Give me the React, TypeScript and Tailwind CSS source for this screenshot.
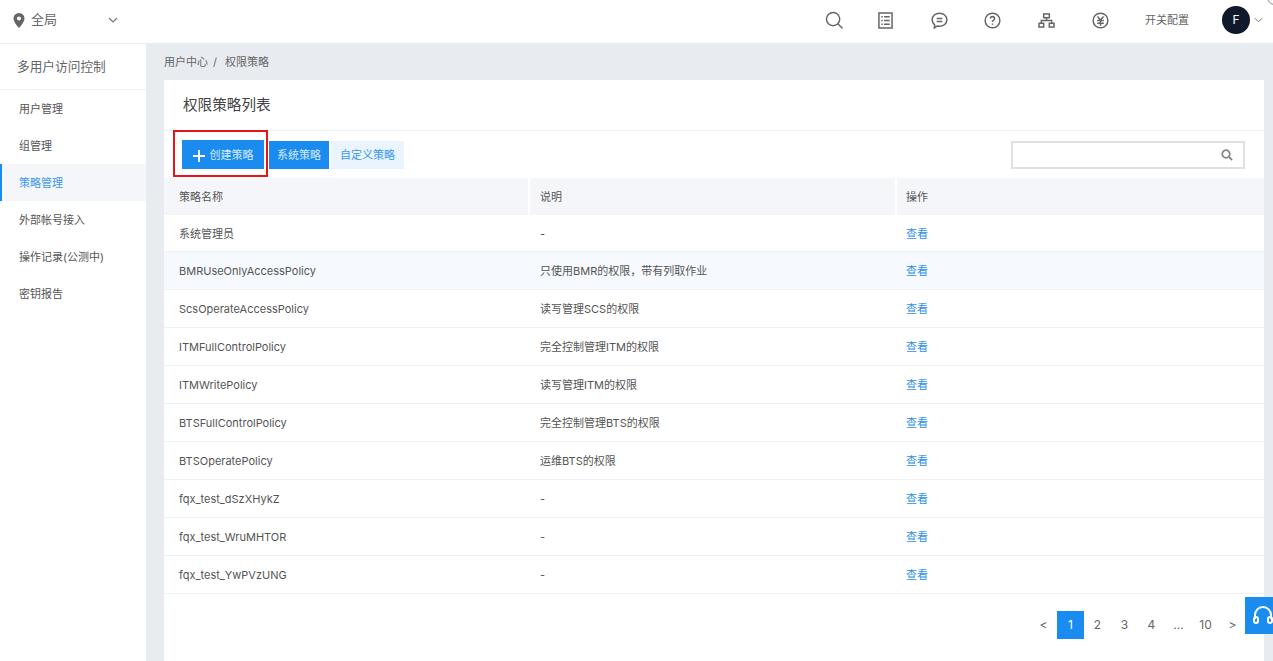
import React from "react";

const rows: [string, string][] = [
  ["系统管理员", "-"],
  ["BMRUseOnlyAccessPolicy", "只使用BMR的权限，带有列取作业"],
  ["ScsOperateAccessPolicy", "读写管理SCS的权限"],
  ["ITMFullControlPolicy", "完全控制管理ITM的权限"],
  ["ITMWritePolicy", "读写管理ITM的权限"],
  ["BTSFullControlPolicy", "完全控制管理BTS的权限"],
  ["BTSOperatePolicy", "运维BTS的权限"],
  ["fqx_test_dSzXHykZ", "-"],
  ["fqx_test_WruMHTOR", "-"],
  ["fqx_test_YwPVzUNG", "-"],
];
const menu = ["用户管理", "组管理", "策略管理", "外部帐号接入", "操作记录(公测中)", "密钥报告"];

const S = { fill: "none", stroke: "#666", strokeWidth: 1.6 };

function TopIcons() {
  return (
    <div className="flex items-center">
      <svg width="18" height="18" viewBox="0 0 20 20" {...S}>
        <circle cx="9" cy="9" r="7.400" />
        <path d="M14.500 14.500l4.500 4.500" strokeLinecap="round" />
      </svg>
      <svg width="15" height="17" viewBox="0 0 16 18" className="ml-[35px]" {...S}>
        <rect x="1" y="1" width="14" height="16" />
        <path d="M3.500 5h1.500M6.500 5h6M3.500 9h1.500M6.500 9h6M3.500 13h1.500M6.500 13h6" />
      </svg>
      <svg width="17" height="17" viewBox="0 0 18 18" className="ml-[38px]" {...S}>
        <path d="M9 1.200c4.300 0 7.800 3 7.800 7s-3.500 7-7.800 7c-.9 0-1.700-.1-2.500-.4l-3 2.200.4-3.400C2.200 12.300 1.200 10.400 1.200 8.200c0-4 3.500-7 7.800-7z" />
        <path d="M6 6.800h6M6 10h6" />
      </svg>
      <svg width="17" height="17" viewBox="0 0 18 18" className="ml-[36px]" {...S}>
        <circle cx="9" cy="9" r="7.800" />
        <path d="M6.800 7c0-1.300 1-2.100 2.200-2.100s2.200.8 2.200 2c0 1.900-2.200 1.800-2.200 3.700" />
        <path d="M9 12.200v1.400" />
      </svg>
      <svg width="17" height="15" viewBox="0 0 18 16" className="ml-[37px]" {...S}>
        <rect x="6" y="1" width="6" height="4" />
        <rect x="1" y="11" width="5" height="4" />
        <rect x="12" y="11" width="5" height="4" />
        <path d="M9 5v3M3.500 11V8h11v3" />
      </svg>
      <svg width="17" height="17" viewBox="0 0 18 18" className="ml-[37px]" {...S}>
        <circle cx="9" cy="9" r="7.800" />
        <path d="M5.800 4.800L9 8.500l3.200-3.700M5.500 9h7M5.500 11.800h7M9 8.500V14.500" />
      </svg>
    </div>
  );
}

export default function App() {
  return (
    <div className="relative flex h-[661px] w-[1273px] flex-col overflow-hidden bg-[#e8ebf0] font-['Inter','Noto_Sans_CJK_SC',sans-serif] text-[11px] text-[#555]">
      <header className="flex h-[43px] shrink-0 items-center bg-white pb-[3px]">
        <div className="flex w-[146px] items-center pl-[13px]">
          <svg width="12" height="15" viewBox="0 0 12 15">
            <path fillRule="evenodd" fill="#666" d="M6 0a5.500 5.500 0 0 1 5.500 5.500C11.500 9.300 6 15 6 15S.5 9.300.5 5.500A5.500 5.500 0 0 1 6 0zm0 3.500a2 2 0 1 0 0 4 2 2 0 0 0 0-4z" />
          </svg>
          <span className="ml-[6px] text-[13px] text-[#666]">全局</span>
          <svg width="10" height="6" viewBox="0 0 10 6" className="ml-[51px]" fill="none" stroke="#777" strokeWidth="1.200">
            <path d="M1 1l4 4 4-4" />
          </svg>
        </div>
        <div className="ml-auto flex items-center">
          <TopIcons />
          <span className="ml-[36px] text-[#666]">开关配置</span>
          <div className="ml-[33px] flex h-[28px] w-[28px] items-center justify-center rounded-full bg-[#10182b] text-[12px] text-white">F</div>
          <svg width="9" height="6" viewBox="0 0 10 6" className="ml-[4px] mr-[10px]" fill="none" stroke="#777" strokeWidth="1.100">
            <path d="M1 1l4 4 4-4" />
          </svg>
        </div>
      </header>

      <div className="flex min-h-0 flex-1">
        <aside className="w-[146px] shrink-0 border-t border-[#eceef2] bg-white">
          <div className="flex h-[46px] items-center border-b border-[#eceef2] pl-[17px] text-[12.700px] text-[#666]">多用户访问控制</div>
          {menu.map((m) => {
            const active = m === "策略管理";
            return (
              <div
                key={m}
                className={
                  active
                    ? "flex h-[37px] items-center border-l-2 border-[#1a8cf0] bg-[#f5f6fa] pl-[17px] pt-[2px] text-[#3a97f0]"
                    : "flex h-[37px] items-center pl-[19px] pt-[2px] text-[#555]"
                }
              >
                {m}
              </div>
            );
          })}
        </aside>

        <main className="flex min-w-0 flex-1 flex-col pl-[18px] pr-[9px]">
          <div className="flex h-[37px] shrink-0 items-center pt-[2px] text-[#666]">
            用户中心<span className="ml-[5px] mr-[8px]">/</span>权限策略
          </div>
          <section className="flex-1 bg-white">
            <div className="flex h-[51px] items-center border-b border-[#eef0f5] pl-[19px] pt-[2px] text-[14.600px] text-[#444]">权限策略列表</div>
            <div className="flex h-[47px] items-center pl-[18px] pr-[19px]">
              <div className="relative flex h-[29px] w-[82px] items-center justify-center bg-[#1a8cf0] pt-[2px] text-[#d6eaff]">
                <svg width="12" height="12" viewBox="0 0 12 12" className="mr-[5px]" stroke="#fff" strokeWidth="2">
                  <path d="M6 0v12M0 6h12" />
                </svg>
                创建策略
                <div className="absolute left-[-9px] top-[-10px] h-[47px] w-[95px] border-2 border-[#e8141c]" />
              </div>
              <div className="ml-[5px] flex h-[28px] w-[60px] items-center justify-center bg-[#1a8cf0] pt-[1px] text-[#d6eaff]">系统策略</div>
              <div className="ml-[2px] flex h-[28px] w-[73px] items-center justify-center bg-[#e9f4fe] pt-[1px] text-[#3a97f0]">自定义策略</div>
              <div className="ml-auto flex h-[28px] w-[234px] items-center justify-end border-2 border-[#e0e0e0] pr-[10px]">
                <svg width="12" height="12" viewBox="0 0 12 12" fill="none" stroke="#888" strokeWidth="1.800">
                  <circle cx="5" cy="5" r="3.800" />
                  <path d="M8 8l3.200 3.200" />
                </svg>
              </div>
            </div>

            <div className="flex h-[37px] items-center bg-[#f5f6fa] text-[#555]">
              <div className="flex h-full w-[366px] items-center border-r-2 border-white pl-[15px] pt-[2px]">策略名称</div>
              <div className="flex h-full w-[367px] items-center border-r-2 border-white pl-[10px] pt-[2px]">说明</div>
              <div className="pl-[9px] pt-[2px]">操作</div>
            </div>
            {rows.map(([name, desc], i) => (
              <div
                key={name}
                className={
                  (i === 1 ? "bg-[#f6fafe] " : "") +
                  (i === 0 ? "h-[37px] " : "h-[38px] ") +
                  "flex items-center border-b border-[#eef1f6] pt-[2px]"
                }
              >
                <div className="w-[366px] pl-[15px]">{name}</div>
                <div className="w-[367px] pl-[10px]">{desc}</div>
                <div className="pl-[9px] text-[#2d8fe8]">查看</div>
              </div>
            ))}

            <div className="mt-[17px] flex h-[28px] items-center justify-end pr-[18px] text-[12px] text-[#666]">
              <span className="w-[27px] text-center">&lt;</span>
              <span className="flex h-[28px] w-[27px] items-center justify-center bg-[#1a8cf0] text-white">1</span>
              <span className="w-[27px] text-center">2</span>
              <span className="w-[27px] text-center">3</span>
              <span className="w-[27px] text-center">4</span>
              <span className="w-[27px] text-center">...</span>
              <span className="w-[27px] text-center">10</span>
              <span className="w-[27px] text-center">&gt;</span>
            </div>
          </section>
        </main>
      </div>

      <div className="absolute left-[1245px] top-[597px] flex h-[37px] w-[28px] items-center overflow-hidden bg-[#1a8cf0] pl-[8px]">
        <svg width="24" height="22" viewBox="0 0 24 22" className="shrink-0" fill="none" stroke="#fff" strokeWidth="2">
          <path d="M2 14V10a8 8 0 0 1 16 0v4" />
          <rect x="1" y="12" width="4" height="6" rx="2" />
          <rect x="15" y="12" width="4" height="6" rx="2" />
        </svg>
      </div>
      <div className="absolute right-[-9px] top-[-10px] h-[15px] w-[15px] rounded-full border border-[#888] bg-white" />
    </div>
  );
}
